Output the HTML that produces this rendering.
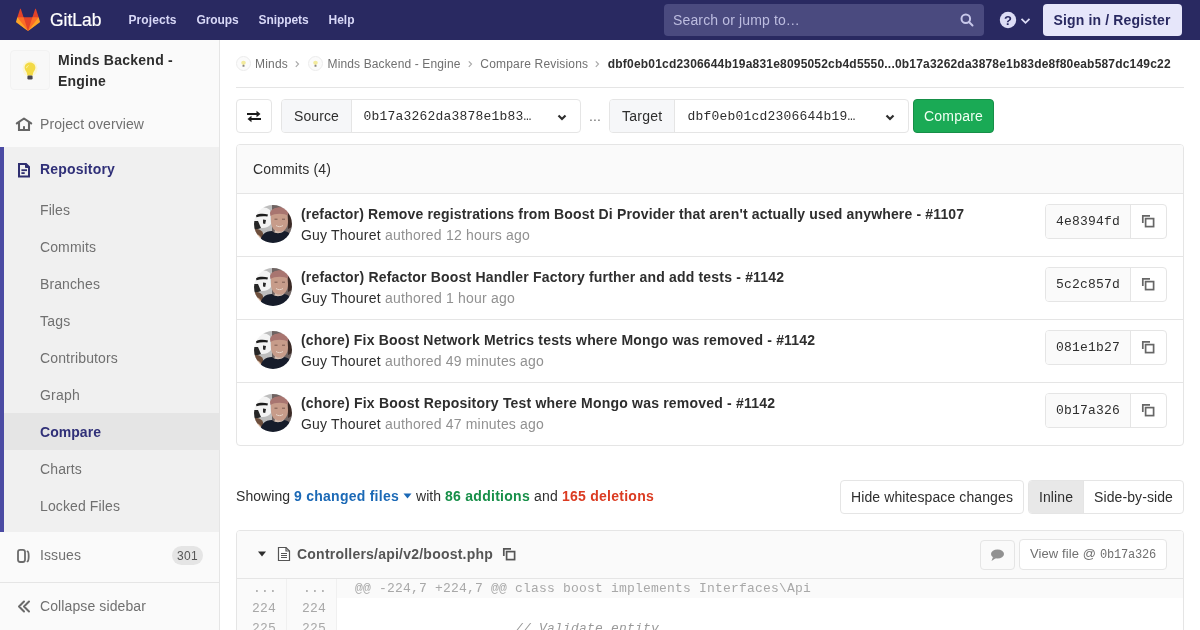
<!DOCTYPE html>
<html><head><meta charset="utf-8">
<style>
*{box-sizing:border-box;margin:0;padding:0}
html,body{width:1200px;height:630px;overflow:hidden;background:#fff;font-family:"Liberation Sans",sans-serif;font-size:14px;color:#2e2e2e}
#wrap{position:absolute;left:0;top:0;width:1200px;height:630px;will-change:transform;overflow:hidden;background:#fff}
.t{position:absolute;white-space:pre;line-height:normal}
.r{position:absolute}
</style></head><body><div id="wrap">
<div class="r" style="left:0px;top:0px;width:1200px;height:40px;background:#292961;"></div>
<svg class="r" style="left:16px;top:8px;" width="24" height="24" viewBox="0 0 36 36"><path fill="#e24329" d="M2 14l9.38 9v-9l-4-12.28c-.205-.632-1.176-.632-1.38 0z"/><path fill="#e24329" d="M34 14l-9.38 9v-9l4-12.28c.205-.632 1.176-.632 1.38 0z"/><path fill="#e24329" d="M18,34.38 3,14 33,14 Z"/><path fill="#fc6d26" d="M18,34.38 11.38,14 2,14 6,25Z"/><path fill="#fc6d26" d="M18,34.38 24.62,14 34,14 30,25Z"/><path fill="#fca326" d="M2 14L.1 20.16c-.18.565 0 1.2.5 1.56l17.42 12.66z"/><path fill="#fca326" d="M34 14l1.9 6.16c.18.565 0 1.2-.5 1.56L18 34.38z"/></svg>
<div class="t" style="left:49.5px;top:8.5px;font-size:19px;color:#fff;transform:scaleX(0.92);transform-origin:0 0;-webkit-text-stroke:0.2px #fff">GitLab</div>
<div class="t" style="left:128.5px;top:13px;font-size:12px;color:#d8d8f7;font-family:'Liberation Sans',sans-serif;letter-spacing:0.081px;font-weight:bold">Projects</div>
<div class="t" style="left:196.5px;top:13px;font-size:12px;color:#d8d8f7;font-family:'Liberation Sans',sans-serif;letter-spacing:-0.111px;font-weight:bold">Groups</div>
<div class="t" style="left:258.5px;top:13px;font-size:12px;color:#d8d8f7;font-family:'Liberation Sans',sans-serif;letter-spacing:-0.084px;font-weight:bold">Snippets</div>
<div class="t" style="left:328.5px;top:13px;font-size:12px;color:#d8d8f7;font-family:'Liberation Sans',sans-serif;letter-spacing:-0.001px;font-weight:bold">Help</div>
<div class="r" style="left:664px;top:4px;width:320px;height:32px;background:#4a4a7f;border-radius:4px"></div>
<div class="t" style="left:673px;top:12px;font-size:14px;color:#bdbde0;font-family:'Liberation Sans',sans-serif;letter-spacing:0.139px">Search or jump to…</div>
<svg class="r" style="left:960px;top:13px;" width="14" height="14" viewBox="0 0 14 14"><circle cx="5.8" cy="5.8" r="4.3" fill="none" stroke="#c8c8ea" stroke-width="2"/><path d="M9 9l3.5 3.5" stroke="#c8c8ea" stroke-width="2" stroke-linecap="round"/></svg>
<svg class="r" style="left:999px;top:11px;" width="18" height="18" viewBox="0 0 18 18"><circle cx="9" cy="9" r="8.2" fill="#dcdcf5"/><text x="9" y="13.6" text-anchor="middle" font-family="Liberation Sans" font-weight="bold" font-size="13" fill="#292961">?</text></svg>
<svg class="r" style="left:1020px;top:17px;" width="11" height="8" viewBox="0 0 11 8"><path d="M1.5 1.8l4 4 4-4" fill="none" stroke="#dcdcf5" stroke-width="1.8"/></svg>
<div class="r" style="left:1043px;top:4px;width:139px;height:32px;background:#e6e6fa;border-radius:4px"></div>
<div class="t" style="left:1053.5px;top:12px;font-size:14px;color:#292961;font-family:'Liberation Sans',sans-serif;letter-spacing:0.147px;font-weight:bold">Sign in / Register</div>
<div class="r" style="left:0px;top:40px;width:220px;height:590px;background:#fafafa;border-right:1px solid #e5e5e5"></div>
<div class="r" style="left:10px;top:50px;width:40px;height:40px;background:#f8f8f8;border:1px solid #f2f2f2;border-radius:4px"></div>
<svg class="r" style="left:22px;top:60px;" width="16" height="23" viewBox="0 0 16 23"><defs><filter id="bb" x="-30%" y="-30%" width="160%" height="160%"><feGaussianBlur stdDeviation="0.45"/></filter></defs><g filter="url(#bb)"><ellipse cx="8" cy="8.5" rx="7.5" ry="8" fill="#fbf6d8"/><path d="M8 2.5C4.6 2.5 2.6 5 2.6 7.6c0 2.2 1.4 3.3 2 4.6.4.9.6 2.1.7 3.4h5.4c.1-1.3.3-2.5.7-3.4.6-1.3 2-2.4 2-4.6C13.4 5 11.4 2.5 8 2.5z" fill="#f3da45"/><path d="M6.5 5.5c-1.2.6-1.8 1.6-1.9 2.6" stroke="#fff6b8" stroke-width="1" fill="none"/><rect x="5.4" y="15.5" width="5.2" height="4" rx="1.2" fill="#4a4650"/></g></svg>
<div class="t" style="left:58px;top:52px;font-size:14px;color:#2e2e2e;font-family:'Liberation Sans',sans-serif;letter-spacing:0.251px;font-weight:bold">Minds Backend -</div>
<div class="t" style="left:58px;top:73px;font-size:14px;color:#2e2e2e;font-family:'Liberation Sans',sans-serif;letter-spacing:0.222px;font-weight:bold">Engine</div>
<svg class="r" style="left:15px;top:117px;" width="18" height="15" viewBox="0 0 18 15"><path d="M1.8 6.4L9 1.5l7.2 4.9" fill="none" stroke="#666" stroke-width="2.1" stroke-linejoin="round" stroke-linecap="round"/><path d="M4 5v8h10V5" fill="none" stroke="#666" stroke-width="2.1"/><rect x="8" y="9.2" width="2" height="4" fill="#666"/></svg>
<div class="t" style="left:40px;top:116px;font-size:14px;color:#707070;font-family:'Liberation Sans',sans-serif;letter-spacing:0.081px">Project overview</div>
<div class="r" style="left:0px;top:147px;width:219px;height:385px;background:#f0f0f0;border-left:4px solid #4b4ba3"></div>
<div class="r" style="left:4px;top:413px;width:215px;height:37px;background:#e5e5e5;"></div>
<svg class="r" style="left:17px;top:162px;" width="14" height="16" viewBox="0 0 14 16"><path d="M2 2h7l3 3v9.6H2z" fill="none" stroke="#2f2f70" stroke-width="2" stroke-linejoin="miter"/><path d="M8.5 2v3.5h3.5" fill="#2f2f70" stroke="#2f2f70" stroke-width="1"/><rect x="4.4" y="7.3" width="5.6" height="1.8" fill="#2f2f70"/><rect x="4.4" y="10.2" width="3.3" height="1.8" fill="#2f2f70"/></svg>
<div class="t" style="left:40px;top:161px;font-size:14px;color:#303078;font-family:'Liberation Sans',sans-serif;letter-spacing:0.188px;font-weight:bold">Repository</div>
<div class="t" style="left:40px;top:202px;font-size:14px;color:#707070;font-family:'Liberation Sans',sans-serif;letter-spacing:0.088px">Files</div>
<div class="t" style="left:40px;top:239px;font-size:14px;color:#707070;font-family:'Liberation Sans',sans-serif;letter-spacing:0.111px">Commits</div>
<div class="t" style="left:40px;top:276px;font-size:14px;color:#707070;font-family:'Liberation Sans',sans-serif;letter-spacing:0.107px">Branches</div>
<div class="t" style="left:40px;top:313px;font-size:14px;color:#707070;font-family:'Liberation Sans',sans-serif;letter-spacing:0.219px">Tags</div>
<div class="t" style="left:40px;top:350px;font-size:14px;color:#707070;font-family:'Liberation Sans',sans-serif;letter-spacing:0.145px">Contributors</div>
<div class="t" style="left:40px;top:387px;font-size:14px;color:#707070;font-family:'Liberation Sans',sans-serif;letter-spacing:0.218px">Graph</div>
<div class="t" style="left:40px;top:424px;font-size:14px;color:#303078;font-family:'Liberation Sans',sans-serif;letter-spacing:0.045px;font-weight:bold">Compare</div>
<div class="t" style="left:40px;top:461px;font-size:14px;color:#707070;font-family:'Liberation Sans',sans-serif;letter-spacing:0.128px">Charts</div>
<div class="t" style="left:40px;top:498px;font-size:14px;color:#707070;font-family:'Liberation Sans',sans-serif;letter-spacing:0.117px">Locked Files</div>
<svg class="r" style="left:16px;top:548px;" width="16" height="16" viewBox="0 0 16 16"><rect x="2" y="1.8" width="7" height="12.2" rx="2.2" fill="none" stroke="#6b6b6b" stroke-width="1.8"/><path d="M11.5 3.4c1.6.4 1.6 9 0 10" fill="none" stroke="#6b6b6b" stroke-width="1.8" stroke-linecap="round"/></svg>
<div class="t" style="left:40px;top:547px;font-size:14px;color:#707070;font-family:'Liberation Sans',sans-serif;letter-spacing:0.090px">Issues</div>
<div class="r" style="left:172px;top:546px;width:31px;height:19px;background:#e5e5e5;border-radius:10px"></div>
<div class="t" style="left:177px;top:549px;font-size:12px;color:#555;font-family:'Liberation Sans',sans-serif;letter-spacing:0.326px">301</div>
<div class="r" style="left:0px;top:582px;width:219px;height:1px;background:#e5e5e5;"></div>
<svg class="r" style="left:17px;top:600px;" width="14" height="14" viewBox="0 0 14 14"><path d="M7 1.5L2 6.5l5 5M12 1.5L7 6.5l5 5" fill="none" stroke="#6b6b6b" stroke-width="2" stroke-linecap="round" stroke-linejoin="round"/></svg>
<div class="t" style="left:40px;top:598px;font-size:14px;color:#707070;font-family:'Liberation Sans',sans-serif;letter-spacing:0.107px">Collapse sidebar</div>
<svg class="r" style="left:236px;top:56px;" width="15" height="15" viewBox="0 0 15 15"><circle cx="7.5" cy="7.5" r="7" fill="#fbfbfb" stroke="#ececec" stroke-width="1"/><ellipse cx="7.5" cy="6.8" rx="2.3" ry="2.1" fill="#f2ea9c"/><rect x="6.5" y="8.8" width="2" height="2" rx="0.6" fill="#8a8680"/></svg>
<div class="t" style="left:255px;top:57px;font-size:12px;color:#707070;font-family:'Liberation Sans',sans-serif;letter-spacing:0.198px">Minds</div>
<svg class="r" style="left:293.5px;top:60px;" width="6" height="8" viewBox="0 0 6 8"><path d="M1.8 1.3l2.7 2.8-2.7 2.8" fill="none" stroke="#aaa" stroke-width="1.2"/></svg>
<svg class="r" style="left:308px;top:56px;" width="15" height="15" viewBox="0 0 15 15"><circle cx="7.5" cy="7.5" r="7" fill="#fbfbfb" stroke="#ececec" stroke-width="1"/><ellipse cx="7.5" cy="6.8" rx="2.3" ry="2.1" fill="#f2ea9c"/><rect x="6.5" y="8.8" width="2" height="2" rx="0.6" fill="#8a8680"/></svg>
<div class="t" style="left:327.5px;top:57px;font-size:12px;color:#707070;font-family:'Liberation Sans',sans-serif;letter-spacing:0.133px">Minds Backend - Engine</div>
<svg class="r" style="left:466.5px;top:60px;" width="6" height="8" viewBox="0 0 6 8"><path d="M1.8 1.3l2.7 2.8-2.7 2.8" fill="none" stroke="#aaa" stroke-width="1.2"/></svg>
<div class="t" style="left:480.3px;top:57px;font-size:12px;color:#707070;font-family:'Liberation Sans',sans-serif;letter-spacing:0.194px">Compare Revisions</div>
<svg class="r" style="left:594.2px;top:60px;" width="6" height="8" viewBox="0 0 6 8"><path d="M1.8 1.3l2.7 2.8-2.7 2.8" fill="none" stroke="#aaa" stroke-width="1.2"/></svg>
<div class="t" style="left:607.8px;top:57px;font-size:12px;color:#2e2e2e;font-family:'Liberation Sans',sans-serif;letter-spacing:0.192px;font-weight:bold">dbf0eb01cd2306644b19a831e8095052cb4d5550...0b17a3262da3878e1b83de8f80eab587dc149c22</div>
<div class="r" style="left:236px;top:87px;width:948px;height:1px;background:#e5e5e5;"></div>
<div class="r" style="left:236px;top:99px;width:36px;height:34px;background:#fff;border:1px solid #e5e5e5;border-radius:4px"></div>
<svg class="r" style="left:246px;top:110px;" width="16" height="13" viewBox="0 0 16 13"><path d="M1 4h11" stroke="#1a1a1a" stroke-width="2"/><path d="M10.5 0.8l4 3.2-4 3.2z" fill="#1a1a1a"/><path d="M4 9h11" stroke="#1a1a1a" stroke-width="2"/><path d="M5.5 5.8l-4 3.2 4 3.2z" fill="#1a1a1a"/></svg>
<div class="r" style="left:281px;top:99px;width:300px;height:34px;background:#fff;border:1px solid #e5e5e5;border-radius:4px;overflow:hidden"></div>
<div class="r" style="left:282px;top:100px;width:70px;height:32px;background:#f6f7f9;border-right:1px solid #e5e5e5;border-radius:3px 0 0 3px"></div>
<div class="t" style="left:294px;top:108px;font-size:14px;color:#2e2e2e;font-family:'Liberation Sans',sans-serif;letter-spacing:0.107px">Source</div>
<div class="t" style="left:363.5px;top:109px;font-size:13px;color:#2e2e2e;font-family:'Liberation Mono',monospace;letter-spacing:0.199px">0b17a3262da3878e1b83…</div>
<svg class="r" style="left:557px;top:114px;" width="10" height="7" viewBox="0 0 10 7"><path d="M1.5 1.5l3.5 3.5 3.5-3.5" fill="none" stroke="#2e2e2e" stroke-width="2.2"/></svg>
<div class="r" style="left:609px;top:99px;width:300px;height:34px;background:#fff;border:1px solid #e5e5e5;border-radius:4px;overflow:hidden"></div>
<div class="r" style="left:610px;top:100px;width:65px;height:32px;background:#f6f7f9;border-right:1px solid #e5e5e5;border-radius:3px 0 0 3px"></div>
<div class="t" style="left:622px;top:108px;font-size:14px;color:#2e2e2e;font-family:'Liberation Sans',sans-serif;letter-spacing:0.256px">Target</div>
<div class="t" style="left:687.5px;top:109px;font-size:13px;color:#2e2e2e;font-family:'Liberation Mono',monospace;letter-spacing:0.199px">dbf0eb01cd2306644b19…</div>
<svg class="r" style="left:885px;top:114px;" width="10" height="7" viewBox="0 0 10 7"><path d="M1.5 1.5l3.5 3.5 3.5-3.5" fill="none" stroke="#2e2e2e" stroke-width="2.2"/></svg>
<div class="t" style="left:589px;top:108px;font-size:14px;color:#707070;font-family:'Liberation Sans',sans-serif;letter-spacing:0.110px">...</div>
<div class="r" style="left:913px;top:99px;width:81px;height:34px;background:#1aaa55;border:1px solid #168f48;border-radius:4px"></div>
<div class="t" style="left:924px;top:108px;font-size:14px;color:#f0fff2;font-family:'Liberation Sans',sans-serif;letter-spacing:0.203px">Compare</div>
<div class="r" style="left:236px;top:144px;width:948px;height:302px;background:#fff;border:1px solid #e5e5e5;border-radius:4px"></div>
<div class="r" style="left:237px;top:145px;width:946px;height:48px;background:#fafafa;border-radius:3px 3px 0 0"></div>
<div class="r" style="left:237px;top:193px;width:946px;height:1px;background:#e5e5e5;"></div>
<div class="t" style="left:253px;top:161px;font-size:14px;color:#2e2e2e;font-family:'Liberation Sans',sans-serif;letter-spacing:0.162px">Commits (4)</div>
<svg class="r" style="left:254px;top:205px;" width="38" height="38" viewBox="0 0 38 38"><defs><clipPath id="cp0"><circle cx="19" cy="19" r="19"/></clipPath><filter id="bl0" x="-10%" y="-10%" width="120%" height="120%"><feGaussianBlur stdDeviation="0.6"/></filter></defs><g clip-path="url(#cp0)"><g filter="url(#bl0)">
<rect x="-2" y="-2" width="42" height="42" fill="#6e6462"/>
<rect x="-2" y="-2" width="20" height="42" fill="#bdbdbd"/>
<path d="M0 6c4-4 12-5 16-1l1 14c-3 5-11 5-17 2z" fill="#f3f3f3"/>
<path d="M2 10c3-1.5 8-1.8 12-.4l-.6 2c-3.5-.8-7.5-.5-11 .6z" fill="#1d1d1d"/>
<path d="M9 14.5l3 .6-.8 4-2.2-.6z" fill="#2a2a2a"/>
<path d="M-2 16h6l3 7-9 3z" fill="#262626"/>
<path d="M-2 25c4-2 9-1 11 3v12H-2z" fill="#6d4f3c"/>
<path d="M1 29c3 0 6 2 7 6l-8 2z" fill="#d2b19a"/>
<path d="M17 6c4-4 13-4 16 1l1 9c0 7-4 11-8.5 11S17 23 17 16z" fill="#c79c8a"/>
<path d="M16 8c2-7 16-8 19-1l-.5 4c-4-3-14-3-18 0z" fill="#a87470"/>
<path d="M34 8c3 2 5 8 4 14l-4 2z" fill="#3b2b28"/>
<path d="M20.5 14.2h3M28 14.2h3" stroke="#7a5a50" stroke-width="1"/>
<path d="M22 20.5c2 1.5 5 1.5 7 0" stroke="#e6d4c8" stroke-width="1" fill="none"/>
<path d="M21 25c3 2 7 2 9 0l1 4h-11z" fill="#d3bcae"/>
<path d="M6 40c0-10 5-14 12-14 3 3 9 3 12 0 6 1 9 5 10 14z" fill="#151c2c"/>
</g></g></svg>
<div class="t" style="left:301px;top:206px;font-size:14px;color:#2e2e2e;font-family:'Liberation Sans',sans-serif;letter-spacing:0.154px;font-weight:bold">(refactor) Remove registrations from Boost Di Provider that aren&#x27;t actually used anywhere - #1107</div>
<div class="t" style="left:301px;top:227px;font-size:14px;color:#2e2e2e;font-family:'Liberation Sans',sans-serif;letter-spacing:0.199px">Guy Thouret</div>
<div class="t" style="left:385px;top:227px;font-size:14px;color:#919191;font-family:'Liberation Sans',sans-serif;letter-spacing:0.196px">authored 12 hours ago</div>
<div class="r" style="left:1045px;top:204px;width:122px;height:35px;background:#fff;border:1px solid #e5e5e5;border-radius:4px;overflow:hidden"></div>
<div class="r" style="left:1046px;top:205px;width:85px;height:33px;background:#fafafa;border-right:1px solid #e5e5e5;border-radius:3px 0 0 3px"></div>
<div class="t" style="left:1056px;top:214px;font-size:13px;color:#2e2e2e;font-family:'Liberation Mono',monospace;letter-spacing:0.199px">4e8394fd</div>
<svg class="r" style="left:1141px;top:214px;" width="14" height="14" viewBox="0 0 14 14"><path d="M1.8 9V1.8H9" fill="none" stroke="#666" stroke-width="1.7"/><rect x="4.6" y="4.6" width="8" height="8" fill="none" stroke="#666" stroke-width="1.7"/></svg>
<div class="r" style="left:237px;top:256px;width:946px;height:1px;background:#e5e5e5;"></div>
<svg class="r" style="left:254px;top:268px;" width="38" height="38" viewBox="0 0 38 38"><defs><clipPath id="cp1"><circle cx="19" cy="19" r="19"/></clipPath><filter id="bl1" x="-10%" y="-10%" width="120%" height="120%"><feGaussianBlur stdDeviation="0.6"/></filter></defs><g clip-path="url(#cp1)"><g filter="url(#bl1)">
<rect x="-2" y="-2" width="42" height="42" fill="#6e6462"/>
<rect x="-2" y="-2" width="20" height="42" fill="#bdbdbd"/>
<path d="M0 6c4-4 12-5 16-1l1 14c-3 5-11 5-17 2z" fill="#f3f3f3"/>
<path d="M2 10c3-1.5 8-1.8 12-.4l-.6 2c-3.5-.8-7.5-.5-11 .6z" fill="#1d1d1d"/>
<path d="M9 14.5l3 .6-.8 4-2.2-.6z" fill="#2a2a2a"/>
<path d="M-2 16h6l3 7-9 3z" fill="#262626"/>
<path d="M-2 25c4-2 9-1 11 3v12H-2z" fill="#6d4f3c"/>
<path d="M1 29c3 0 6 2 7 6l-8 2z" fill="#d2b19a"/>
<path d="M17 6c4-4 13-4 16 1l1 9c0 7-4 11-8.5 11S17 23 17 16z" fill="#c79c8a"/>
<path d="M16 8c2-7 16-8 19-1l-.5 4c-4-3-14-3-18 0z" fill="#a87470"/>
<path d="M34 8c3 2 5 8 4 14l-4 2z" fill="#3b2b28"/>
<path d="M20.5 14.2h3M28 14.2h3" stroke="#7a5a50" stroke-width="1"/>
<path d="M22 20.5c2 1.5 5 1.5 7 0" stroke="#e6d4c8" stroke-width="1" fill="none"/>
<path d="M21 25c3 2 7 2 9 0l1 4h-11z" fill="#d3bcae"/>
<path d="M6 40c0-10 5-14 12-14 3 3 9 3 12 0 6 1 9 5 10 14z" fill="#151c2c"/>
</g></g></svg>
<div class="t" style="left:301px;top:269px;font-size:14px;color:#2e2e2e;font-family:'Liberation Sans',sans-serif;letter-spacing:0.188px;font-weight:bold">(refactor) Refactor Boost Handler Factory further and add tests - #1142</div>
<div class="t" style="left:301px;top:290px;font-size:14px;color:#2e2e2e;font-family:'Liberation Sans',sans-serif;letter-spacing:0.199px">Guy Thouret</div>
<div class="t" style="left:385px;top:290px;font-size:14px;color:#919191;font-family:'Liberation Sans',sans-serif;letter-spacing:0.205px">authored 1 hour ago</div>
<div class="r" style="left:1045px;top:267px;width:122px;height:35px;background:#fff;border:1px solid #e5e5e5;border-radius:4px;overflow:hidden"></div>
<div class="r" style="left:1046px;top:268px;width:85px;height:33px;background:#fafafa;border-right:1px solid #e5e5e5;border-radius:3px 0 0 3px"></div>
<div class="t" style="left:1056px;top:277px;font-size:13px;color:#2e2e2e;font-family:'Liberation Mono',monospace;letter-spacing:0.199px">5c2c857d</div>
<svg class="r" style="left:1141px;top:277px;" width="14" height="14" viewBox="0 0 14 14"><path d="M1.8 9V1.8H9" fill="none" stroke="#666" stroke-width="1.7"/><rect x="4.6" y="4.6" width="8" height="8" fill="none" stroke="#666" stroke-width="1.7"/></svg>
<div class="r" style="left:237px;top:319px;width:946px;height:1px;background:#e5e5e5;"></div>
<svg class="r" style="left:254px;top:331px;" width="38" height="38" viewBox="0 0 38 38"><defs><clipPath id="cp2"><circle cx="19" cy="19" r="19"/></clipPath><filter id="bl2" x="-10%" y="-10%" width="120%" height="120%"><feGaussianBlur stdDeviation="0.6"/></filter></defs><g clip-path="url(#cp2)"><g filter="url(#bl2)">
<rect x="-2" y="-2" width="42" height="42" fill="#6e6462"/>
<rect x="-2" y="-2" width="20" height="42" fill="#bdbdbd"/>
<path d="M0 6c4-4 12-5 16-1l1 14c-3 5-11 5-17 2z" fill="#f3f3f3"/>
<path d="M2 10c3-1.5 8-1.8 12-.4l-.6 2c-3.5-.8-7.5-.5-11 .6z" fill="#1d1d1d"/>
<path d="M9 14.5l3 .6-.8 4-2.2-.6z" fill="#2a2a2a"/>
<path d="M-2 16h6l3 7-9 3z" fill="#262626"/>
<path d="M-2 25c4-2 9-1 11 3v12H-2z" fill="#6d4f3c"/>
<path d="M1 29c3 0 6 2 7 6l-8 2z" fill="#d2b19a"/>
<path d="M17 6c4-4 13-4 16 1l1 9c0 7-4 11-8.5 11S17 23 17 16z" fill="#c79c8a"/>
<path d="M16 8c2-7 16-8 19-1l-.5 4c-4-3-14-3-18 0z" fill="#a87470"/>
<path d="M34 8c3 2 5 8 4 14l-4 2z" fill="#3b2b28"/>
<path d="M20.5 14.2h3M28 14.2h3" stroke="#7a5a50" stroke-width="1"/>
<path d="M22 20.5c2 1.5 5 1.5 7 0" stroke="#e6d4c8" stroke-width="1" fill="none"/>
<path d="M21 25c3 2 7 2 9 0l1 4h-11z" fill="#d3bcae"/>
<path d="M6 40c0-10 5-14 12-14 3 3 9 3 12 0 6 1 9 5 10 14z" fill="#151c2c"/>
</g></g></svg>
<div class="t" style="left:301px;top:332px;font-size:14px;color:#2e2e2e;font-family:'Liberation Sans',sans-serif;letter-spacing:0.186px;font-weight:bold">(chore) Fix Boost Network Metrics tests where Mongo was removed - #1142</div>
<div class="t" style="left:301px;top:353px;font-size:14px;color:#2e2e2e;font-family:'Liberation Sans',sans-serif;letter-spacing:0.199px">Guy Thouret</div>
<div class="t" style="left:385px;top:353px;font-size:14px;color:#919191;font-family:'Liberation Sans',sans-serif;letter-spacing:0.179px">authored 49 minutes ago</div>
<div class="r" style="left:1045px;top:330px;width:122px;height:35px;background:#fff;border:1px solid #e5e5e5;border-radius:4px;overflow:hidden"></div>
<div class="r" style="left:1046px;top:331px;width:85px;height:33px;background:#fafafa;border-right:1px solid #e5e5e5;border-radius:3px 0 0 3px"></div>
<div class="t" style="left:1056px;top:340px;font-size:13px;color:#2e2e2e;font-family:'Liberation Mono',monospace;letter-spacing:0.199px">081e1b27</div>
<svg class="r" style="left:1141px;top:340px;" width="14" height="14" viewBox="0 0 14 14"><path d="M1.8 9V1.8H9" fill="none" stroke="#666" stroke-width="1.7"/><rect x="4.6" y="4.6" width="8" height="8" fill="none" stroke="#666" stroke-width="1.7"/></svg>
<div class="r" style="left:237px;top:382px;width:946px;height:1px;background:#e5e5e5;"></div>
<svg class="r" style="left:254px;top:394px;" width="38" height="38" viewBox="0 0 38 38"><defs><clipPath id="cp3"><circle cx="19" cy="19" r="19"/></clipPath><filter id="bl3" x="-10%" y="-10%" width="120%" height="120%"><feGaussianBlur stdDeviation="0.6"/></filter></defs><g clip-path="url(#cp3)"><g filter="url(#bl3)">
<rect x="-2" y="-2" width="42" height="42" fill="#6e6462"/>
<rect x="-2" y="-2" width="20" height="42" fill="#bdbdbd"/>
<path d="M0 6c4-4 12-5 16-1l1 14c-3 5-11 5-17 2z" fill="#f3f3f3"/>
<path d="M2 10c3-1.5 8-1.8 12-.4l-.6 2c-3.5-.8-7.5-.5-11 .6z" fill="#1d1d1d"/>
<path d="M9 14.5l3 .6-.8 4-2.2-.6z" fill="#2a2a2a"/>
<path d="M-2 16h6l3 7-9 3z" fill="#262626"/>
<path d="M-2 25c4-2 9-1 11 3v12H-2z" fill="#6d4f3c"/>
<path d="M1 29c3 0 6 2 7 6l-8 2z" fill="#d2b19a"/>
<path d="M17 6c4-4 13-4 16 1l1 9c0 7-4 11-8.5 11S17 23 17 16z" fill="#c79c8a"/>
<path d="M16 8c2-7 16-8 19-1l-.5 4c-4-3-14-3-18 0z" fill="#a87470"/>
<path d="M34 8c3 2 5 8 4 14l-4 2z" fill="#3b2b28"/>
<path d="M20.5 14.2h3M28 14.2h3" stroke="#7a5a50" stroke-width="1"/>
<path d="M22 20.5c2 1.5 5 1.5 7 0" stroke="#e6d4c8" stroke-width="1" fill="none"/>
<path d="M21 25c3 2 7 2 9 0l1 4h-11z" fill="#d3bcae"/>
<path d="M6 40c0-10 5-14 12-14 3 3 9 3 12 0 6 1 9 5 10 14z" fill="#151c2c"/>
</g></g></svg>
<div class="t" style="left:301px;top:395px;font-size:14px;color:#2e2e2e;font-family:'Liberation Sans',sans-serif;letter-spacing:0.202px;font-weight:bold">(chore) Fix Boost Repository Test where Mongo was removed - #1142</div>
<div class="t" style="left:301px;top:416px;font-size:14px;color:#2e2e2e;font-family:'Liberation Sans',sans-serif;letter-spacing:0.199px">Guy Thouret</div>
<div class="t" style="left:385px;top:416px;font-size:14px;color:#919191;font-family:'Liberation Sans',sans-serif;letter-spacing:0.179px">authored 47 minutes ago</div>
<div class="r" style="left:1045px;top:393px;width:122px;height:35px;background:#fff;border:1px solid #e5e5e5;border-radius:4px;overflow:hidden"></div>
<div class="r" style="left:1046px;top:394px;width:85px;height:33px;background:#fafafa;border-right:1px solid #e5e5e5;border-radius:3px 0 0 3px"></div>
<div class="t" style="left:1056px;top:403px;font-size:13px;color:#2e2e2e;font-family:'Liberation Mono',monospace;letter-spacing:0.199px">0b17a326</div>
<svg class="r" style="left:1141px;top:403px;" width="14" height="14" viewBox="0 0 14 14"><path d="M1.8 9V1.8H9" fill="none" stroke="#666" stroke-width="1.7"/><rect x="4.6" y="4.6" width="8" height="8" fill="none" stroke="#666" stroke-width="1.7"/></svg>
<div class="t" style="left:236px;top:488px;font-size:14px;color:#2e2e2e;font-family:'Liberation Sans',sans-serif;letter-spacing:0.051px">Showing </div>
<div class="t" style="left:294px;top:488px;font-size:14px;color:#1b69b6;font-family:'Liberation Sans',sans-serif;letter-spacing:0.257px;font-weight:bold">9 changed files</div>
<svg class="r" style="left:403px;top:493px;" width="9" height="6" viewBox="0 0 9 6"><path d="M0.5 0.5h8l-4 5z" fill="#1b69b6"/></svg>
<div class="t" style="left:416px;top:488px;font-size:14px;color:#2e2e2e;font-family:'Liberation Sans',sans-serif;letter-spacing:0.043px">with </div>
<div class="t" style="left:445px;top:488px;font-size:14px;color:#168f48;font-family:'Liberation Sans',sans-serif;letter-spacing:0.276px;font-weight:bold">86 additions</div>
<div class="t" style="left:534px;top:488px;font-size:14px;color:#2e2e2e;font-family:'Liberation Sans',sans-serif;letter-spacing:0.188px">and </div>
<div class="t" style="left:562px;top:488px;font-size:14px;color:#db3b21;font-family:'Liberation Sans',sans-serif;letter-spacing:0.254px;font-weight:bold">165 deletions</div>
<div class="r" style="left:840px;top:480px;width:184px;height:34px;background:#fff;border:1px solid #e5e5e5;border-radius:4px"></div>
<div class="t" style="left:851px;top:489px;font-size:14px;color:#2e2e2e;font-family:'Liberation Sans',sans-serif;letter-spacing:0.107px">Hide whitespace changes</div>
<div class="r" style="left:1028px;top:480px;width:156px;height:34px;background:#fff;border:1px solid #e5e5e5;border-radius:4px;overflow:hidden"></div>
<div class="r" style="left:1029px;top:481px;width:55px;height:32px;background:#e8e8e8;border-right:1px solid #e5e5e5;border-radius:3px 0 0 3px"></div>
<div class="t" style="left:1039px;top:489px;font-size:14px;color:#2e2e2e;font-family:'Liberation Sans',sans-serif;letter-spacing:0.089px">Inline</div>
<div class="t" style="left:1094px;top:489px;font-size:14px;color:#2e2e2e;font-family:'Liberation Sans',sans-serif;letter-spacing:0.099px">Side-by-side</div>
<div class="r" style="left:236px;top:530px;width:948px;height:120px;background:#fff;border:1px solid #e5e5e5;border-radius:4px 4px 0 0"></div>
<div class="r" style="left:237px;top:531px;width:946px;height:47px;background:#fafafa;border-radius:3px 3px 0 0"></div>
<div class="r" style="left:237px;top:578px;width:946px;height:1px;background:#e5e5e5;"></div>
<svg class="r" style="left:257px;top:551px;" width="10" height="6" viewBox="0 0 10 6"><path d="M1 0.5h8l-4 5z" fill="#2e2e2e"/></svg>
<svg class="r" style="left:277px;top:546px;" width="14" height="16" viewBox="0 0 14 16"><path d="M1.5 1.5h7.5l3.5 3.5v9.5h-11z" fill="#fff" stroke="#555" stroke-width="1.2"/><path d="M9 1.5v3.5h3.5" fill="none" stroke="#555" stroke-width="1.2"/><path d="M4 7.5h6M4 9.5h6M4 11.5h6" stroke="#555" stroke-width="1"/></svg>
<div class="t" style="left:297px;top:546px;font-size:14px;color:#555;font-family:'Liberation Sans',sans-serif;letter-spacing:0.222px;font-weight:bold">Controllers/api/v2/boost.php</div>
<svg class="r" style="left:502px;top:547px;" width="16" height="15" viewBox="0 0 16 15"><path d="M1.8 9V1.8H9" fill="none" stroke="#555" stroke-width="1.7"/><rect x="4.6" y="4.6" width="8" height="8" fill="none" stroke="#555" stroke-width="1.7"/></svg>
<div class="r" style="left:980px;top:540px;width:35px;height:30px;background:#fafafa;border:1px solid #e5e5e5;border-radius:4px"></div>
<svg class="r" style="left:990px;top:549px;" width="15" height="13" viewBox="0 0 15 13"><ellipse cx="7.5" cy="5" rx="6.5" ry="4.6" fill="#919191"/><path d="M3 8l-1.5 4 4.5-3z" fill="#919191"/></svg>
<div class="r" style="left:1019px;top:539px;width:148px;height:31px;background:#fff;border:1px solid #e5e5e5;border-radius:4px"></div>
<div class="t" style="left:1030px;top:546px;font-size:13px;color:#707070;font-family:'Liberation Sans',sans-serif;letter-spacing:0.098px">View file @ </div>
<div class="t" style="left:1100px;top:548px;font-size:12px;color:#707070;font-family:'Liberation Mono',monospace;letter-spacing:-0.201px">0b17a326</div>
<div class="r" style="left:237px;top:579px;width:100px;height:60px;background:#fafafa;"></div>
<div class="r" style="left:286px;top:579px;width:1px;height:60px;background:#f0f0f0;"></div>
<div class="r" style="left:336px;top:579px;width:1px;height:60px;background:#f0f0f0;"></div>
<div class="r" style="left:337px;top:579px;width:846px;height:19px;background:#fafafa;"></div>
<div class="t" style="left:253px;top:580.5px;font-size:13px;color:#a8a8a8;font-family:'Liberation Mono',monospace;letter-spacing:0.199px">...</div>
<div class="t" style="left:303px;top:580.5px;font-size:13px;color:#a8a8a8;font-family:'Liberation Mono',monospace;letter-spacing:0.199px">...</div>
<div class="t" style="left:355px;top:581px;font-size:13px;color:#a8a8a8;font-family:'Liberation Mono',monospace;letter-spacing:0.199px">@@ -224,7 +224,7 @@ class boost implements Interfaces\Api</div>
<div class="t" style="left:252px;top:601px;font-size:13px;color:#a8a8a8;font-family:'Liberation Mono',monospace;letter-spacing:0.199px">224</div>
<div class="t" style="left:302px;top:601px;font-size:13px;color:#a8a8a8;font-family:'Liberation Mono',monospace;letter-spacing:0.199px">224</div>
<div class="t" style="left:252px;top:621px;font-size:13px;color:#a8a8a8;font-family:'Liberation Mono',monospace;letter-spacing:0.199px">225</div>
<div class="t" style="left:302px;top:621px;font-size:13px;color:#a8a8a8;font-family:'Liberation Mono',monospace;letter-spacing:0.199px">225</div>
<div class="t" style="left:515px;top:621px;font-size:13px;color:#999;font-family:'Liberation Mono',monospace;letter-spacing:0.199px;font-style:italic">// Validate entity</div>
</div></body></html>
